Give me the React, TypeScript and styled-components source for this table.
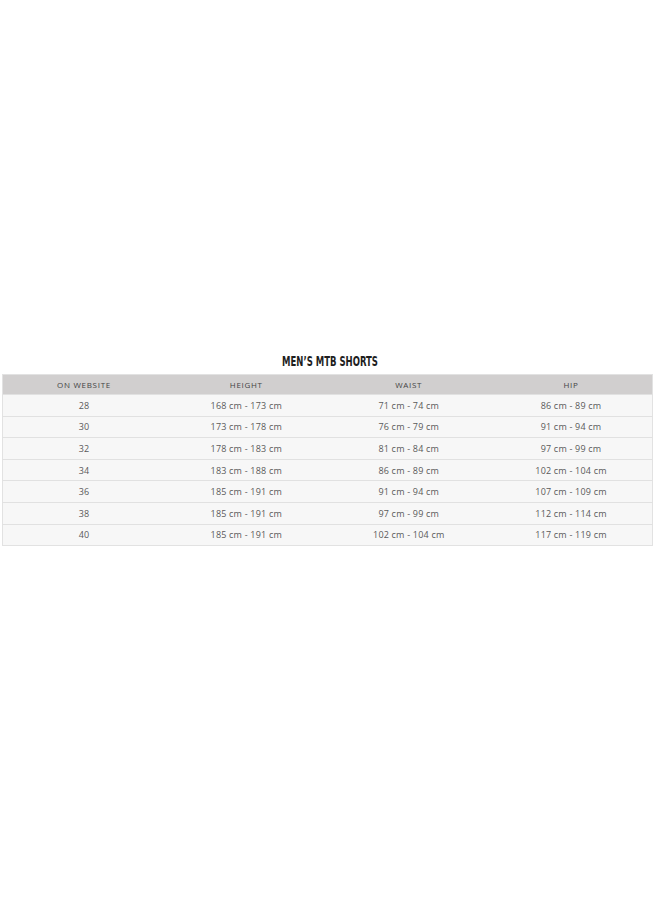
import React from "react";
import styled, { createGlobalStyle } from "styled-components";

const Global = createGlobalStyle`
  html, body { margin: 0; padding: 0; background: #ffffff; }
  body { font-family: "Open Sans", "Noto Sans", sans-serif; }
`;

const Page = styled.div`
  width: 660px;
  height: 900px;
  padding-top: 353px;
  box-sizing: border-box;
`;

const Title = styled.h2`
  margin: 0 0 5px;
  text-align: center;
  font-family: "DejaVu Sans Condensed", "DejaVu Sans", sans-serif;
  font-weight: 700;
  font-size: 13.5px;
  line-height: 16px;
  letter-spacing: 0px;
  color: #1e1e1e;
  text-transform: uppercase;
  transform: scaleX(0.7);
`;

const Table = styled.table`
  margin: 0 0 0 2px;
  width: 651px;
  border-collapse: collapse;
  table-layout: fixed;
  border: 1px solid #e2e2e2;
`;

const HeadCell = styled.th`
  height: 19px;
  padding: 0;
  background: #d1cfcf;
  color: #444;
  font-size: 8px;
  font-weight: 400;
  letter-spacing: 0.7px;
  text-align: center;
  vertical-align: middle;
  text-transform: uppercase;
`;

const Row = styled.tr`
  background: #f7f7f7;
  border-top: 1px solid #e1e1e1;
`;

const Cell = styled.td`
  height: 20.6px;
  padding: 0;
  color: #5a5a5a;
  font-size: 9px;
  letter-spacing: 0.2px;
  text-align: center;
  vertical-align: middle;
`;

const headers = ["On website", "Height", "Waist", "Hip"];
const rows: string[][] = [
  ["28", "168 cm - 173 cm", "71 cm - 74 cm", "86 cm - 89 cm"],
  ["30", "173 cm - 178 cm", "76 cm - 79 cm", "91 cm - 94 cm"],
  ["32", "178 cm - 183 cm", "81 cm - 84 cm", "97 cm - 99 cm"],
  ["34", "183 cm - 188 cm", "86 cm - 89 cm", "102 cm - 104 cm"],
  ["36", "185 cm - 191 cm", "91 cm - 94 cm", "107 cm - 109 cm"],
  ["38", "185 cm - 191 cm", "97 cm - 99 cm", "112 cm - 114 cm"],
  ["40", "185 cm - 191 cm", "102 cm - 104 cm", "117 cm - 119 cm"],
];

export default function App() {
  return (
    <>
      <Global />
      <Page>
        <Title>Men’s MTB Shorts</Title>
        <Table>
          <thead>
            <tr>
              {headers.map((h) => (
                <HeadCell key={h}>{h}</HeadCell>
              ))}
            </tr>
          </thead>
          <tbody>
            {rows.map((r) => (
              <Row key={r[0]}>
                {r.map((c, i) => (
                  <Cell key={i}>{c}</Cell>
                ))}
              </Row>
            ))}
          </tbody>
        </Table>
      </Page>
    </>
  );
}
